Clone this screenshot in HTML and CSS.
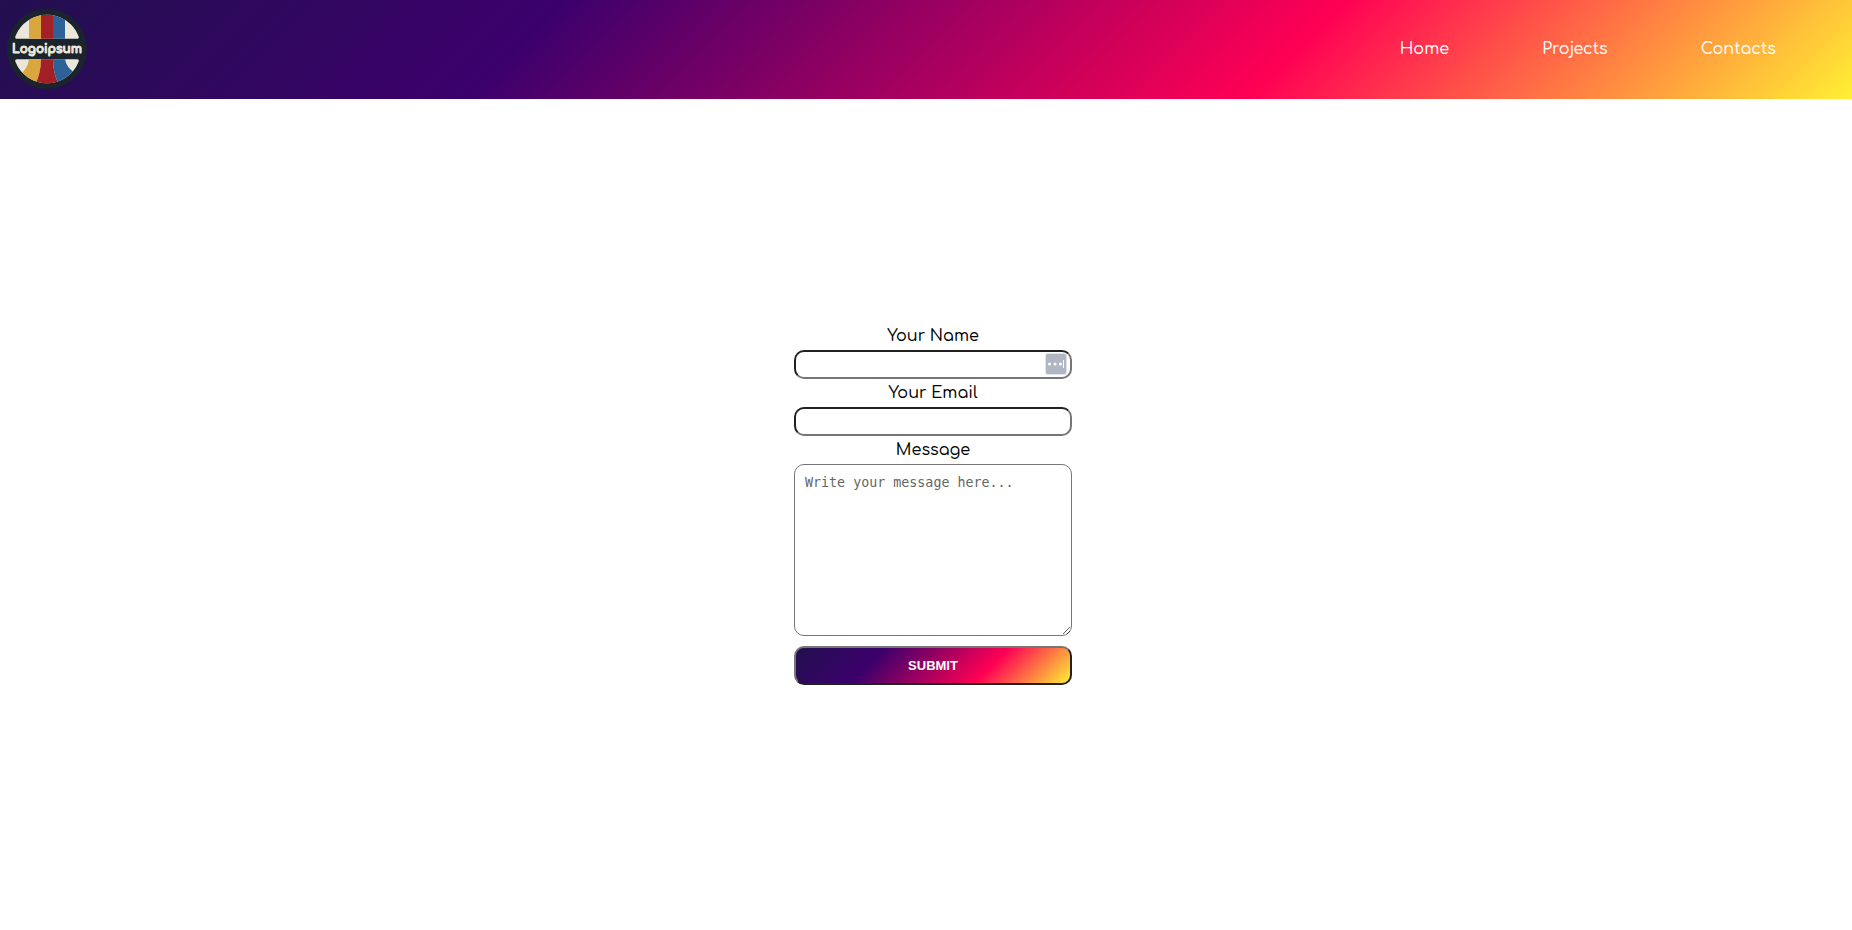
FILE: index.html
```html
<!DOCTYPE html>
<html lang="en">
<head>
<meta charset="utf-8">
<title>Contacts</title>
<link rel="stylesheet" href="styles.css">
</head>
<body>
<header class="header">
  <a class="logo" href="#" aria-label="Home page">
    <svg class="logo-mark" viewBox="0 0 80 80" aria-hidden="true">
      <defs>
        <clipPath id="disc"><path d="M10 29.700Q7.500 29.700 8.500 27A34 34 0 0 1 71.500 27Q72.500 29.700 70 29.700Z"/><path d="M10 50.300Q7.500 50.300 8.500 53A34 34 0 0 0 71.500 53Q72.500 50.300 70 50.300Z"/></clipPath>
      </defs>
      <circle cx="40" cy="40" r="40" fill="#1b242d"/>
      <g clip-path="url(#disc)">
        <path fill="#ebe7db" d="M0 0H80V80H0Z"/>
        <path fill="#d9a73e" d="M22 0H34V30H22Z"/>
        <path fill="#a32126" d="M34 0H46V30H34Z"/>
        <path fill="#2d6299" d="M46 0H58V30H46Z"/>
        <path fill="#d9a73e" d="M22 50H34Q34 64 28 76L12 66Q21 60 22 50Z"/>
        <path fill="#a32126" d="M34 50H46Q46 64 52 76H28Q34 64 34 50Z"/>
        <path fill="#2d6299" d="M46 50H58Q59 58 68 64L52 76Q46 64 46 50Z"/>
      </g>
      <text class="logo-text" x="40" y="44" text-anchor="middle">Logoipsum</text>
    </svg>
  </a>
  <nav class="nav">
    <a class="nav-link" href="#">Home</a>
    <a class="nav-link" href="#">Projects</a>
    <a class="nav-link" href="#">Contacts</a>
  </nav>
</header>
<main class="main">
  <form class="form">
    <label class="label" for="name">Your Name</label>
    <div class="field">
      <input class="input" id="name" type="text">
      <svg class="autofill" viewBox="0 0 22 22" aria-hidden="true">
        <rect width="22" height="22" rx="3" fill="#dfe3ea"/>
        <rect x="1" y="1" width="20" height="20" rx="2" fill="#b0b6c3"/>
        <g fill="#fff"><circle cx="4.500" cy="11" r="1.500"/><circle cx="10" cy="11" r="1.500"/><circle cx="15.500" cy="11" r="1.500"/><path d="M18 7h1v8h-1z"/></g>
      </svg>
    </div>
    <label class="label" for="email">Your Email</label>
    <input class="input" id="email" type="email">
    <label class="label" for="message">Message</label>
    <textarea class="message" id="message" placeholder="Write your message here..."></textarea>
    <button class="submit" type="submit">SUBMIT</button>
  </form>
</main>
</body>
</html>
```
FILE: styles.css
```css
* { box-sizing: border-box; }

:root {
  --sunset: linear-gradient(135deg, #22104f 0%, #3c006c 29%, #ff0054 69%, #fff033 100%);
}

body {
  margin: 0;
  min-height: 100vh;
  display: flex;
  flex-direction: column;
  background: #fff;
  color: #000;
  font-family: Comfortaa, Quicksand, Lato, sans-serif;
  font-size: 16px;
  font-weight: 500;
}

.header {
  display: flex;
  align-items: center;
  justify-content: space-between;
  padding: 9px 76px 10px 7px;
  background: var(--sunset);
}

.logo, .logo-mark { display: block; width: 80px; height: 80px; }

.logo-text {
  font: 700 12px Comfortaa, Lato, sans-serif;
  fill: #ebe7db;
  stroke: #ebe7db;
  stroke-width: 1px;
}

.nav { display: flex; gap: 93px; }

.nav-link {
  color: #fff;
  text-decoration: none;
  line-height: 24px;
}

.main {
  flex: 1;
  display: flex;
  align-items: center;
  justify-content: center;
  padding: 0 0 22px 14px;
}

.form {
  width: 278px;
  display: flex;
  flex-direction: column;
}

.label {
  line-height: 20px;
  padding: 4px 0;
  text-align: center;
}

.field { position: relative; display: flex; }

.input {
  width: 100%;
  height: 29px;
  padding: 5px 10px;
  border: 2px inset #767676;
  border-radius: 10px;
  background: #fff;
}

.autofill {
  position: absolute;
  top: 3px;
  right: 5px;
  width: 22px;
  height: 22px;
}

.message {
  height: 172px;
  padding: 10px;
  border: 1px solid #767676;
  border-radius: 10px;
  font-family: "DejaVu Sans Mono", monospace;
  resize: both;
}

.message::placeholder { color: #666; }

.submit {
  height: 39px;
  margin-top: 10px;
  border: 2px outset #767676;
  border-radius: 10px;
  background: var(--sunset);
  color: #fff;
  font: bold 13px "Liberation Sans", Arial, sans-serif;
}
```
